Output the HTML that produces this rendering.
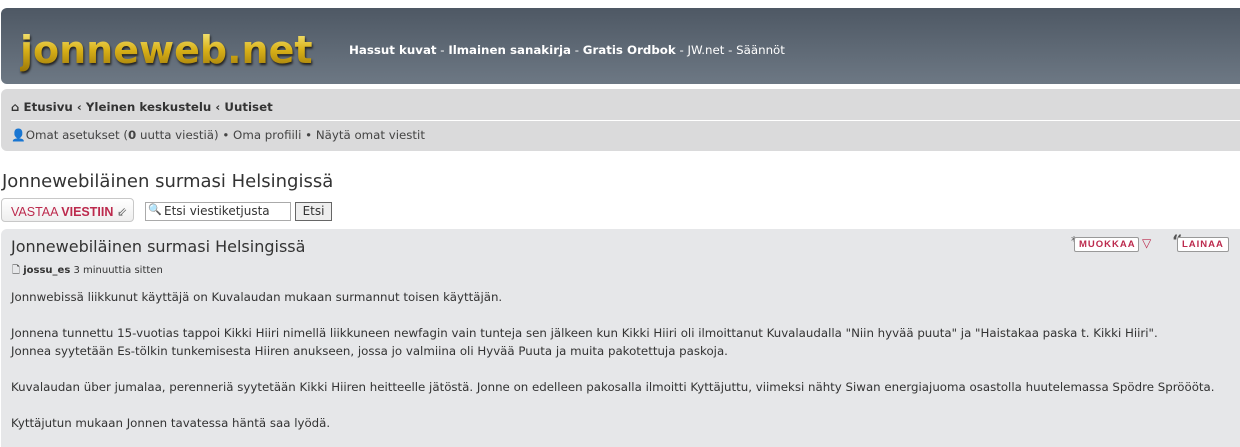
<!DOCTYPE html>
<html><head><meta charset="utf-8"><style>
*{margin:0;padding:0;box-sizing:border-box}
body{width:1240px;height:447px;overflow:hidden;background:#fff;font-family:"DejaVu Sans","Liberation Sans",sans-serif;font-size:11px;color:#333}
.hdr{position:absolute;left:1px;top:8px;width:1239px;height:76px;border-radius:6px 0 0 6px;background:linear-gradient(#4e5864,#6d7884)}
.logo{position:absolute;left:19px;top:20px;font-family:"DejaVu Sans",sans-serif;font-size:38px;letter-spacing:0px;font-weight:bold;color:#d9b820;background:linear-gradient(#fbf08a,#d8b018 50%,#9a7608);-webkit-background-clip:text;background-clip:text;-webkit-text-fill-color:transparent;filter:drop-shadow(1px 2px 1px #222)}
.links{position:absolute;left:348px;top:35px;color:#fff;font-size:11.8px}
.links b{font-weight:bold}
.nav{position:absolute;left:1px;top:89px;width:1239px;height:62px;background:#dadadb;border-radius:6px 0 0 6px}
.nav .l1{position:absolute;left:10px;top:11px;font-weight:bold;font-size:11.8px;color:#333}
.nav hr{position:absolute;left:10px;right:0;top:31px;border:0;border-top:1px solid #fff}
.nav .l2{position:absolute;left:10px;top:39px;font-size:11.8px;color:#444}
h1{position:absolute;left:2px;top:171px;font-size:18px;font-weight:normal;color:#333}
.btn{position:absolute;left:1px;top:198px;width:133px;height:24px;border:1px solid #c8c8c8;border-radius:4px;background:linear-gradient(#fff,#eee);color:#bc2a4d;font-family:"Liberation Sans",sans-serif;font-size:12.5px;padding:5px 0 0 9px}
.search{position:absolute;left:145px;top:202px;width:146px;height:19px;border:1px solid #aaa;background:#fff;font-size:12px;padding:1px 0 0 18px;color:#333}
.go{position:absolute;left:295px;top:202px;width:37px;height:19px;border:1px solid #666;background:#eee;font-size:12px;text-align:center;padding-top:1px}
.post{position:absolute;left:1px;top:229px;width:1239px;height:218px;background:#e6e7e9;border-radius:6px 0 0 0}
.post h2{position:absolute;left:10px;top:8px;font-size:16px;font-weight:normal;color:#333}
.meta{position:absolute;left:11px;top:34px;font-size:10px}
.txt{position:absolute;left:10px;top:59px;font-size:11.8px;line-height:18px;color:#333}
.pb{position:absolute;top:8px;height:15px;border:1px solid #999;border-radius:2px;background:#fff;color:#bc2a4d;font-family:"Liberation Sans",sans-serif;font-weight:bold;font-size:9.5px;letter-spacing:1px;padding:1px 4px 0}
</style></head><body>
<div class="hdr"><div class="logo">jonneweb.net</div>
<div class="links"><b>Hassut kuvat</b> - <b>Ilmainen sanakirja</b> - <b>Gratis Ordbok</b> - JW.net - Säännöt</div></div>
<div class="nav"><div class="l1">⌂ Etusivu ‹ Yleinen keskustelu ‹ Uutiset</div><hr>
<div class="l2">👤Omat asetukset (<b>0</b> uutta viestiä) • Oma profiili • Näytä omat viestit</div></div>
<h1>Jonnewebiläinen surmasi Helsingissä</h1>
<div class="btn">VASTAA <b>VIESTIIN</b> <span style="color:#666">⇙</span></div>
<div class="search"><span style="position:absolute;left:2px;top:0;font-size:11px">🔍</span>Etsi viestiketjusta</div>
<div class="go">Etsi</div>
<div class="post"><h2>Jonnewebiläinen surmasi Helsingissä</h2>
<div class="meta">🗋 <b>jossu_es</b> 3 minuuttia sitten</div>
<span style="position:absolute;left:1070px;top:5px;font-size:12px;color:#555">*</span>
<div class="pb" style="left:1073px;width:65px">MUOKKAA</div>
<span style="position:absolute;left:1141px;top:7px;font-size:12px;color:#bc2a4d;font-weight:bold">▽</span>
<span style="position:absolute;left:1171px;top:2px;font-size:16px;color:#555;font-weight:bold">“</span>
<div class="pb" style="left:1176px;width:52px">LAINAA</div>
<div class="txt">Jonnwebissä liikkunut käyttäjä on Kuvalaudan mukaan surmannut toisen käyttäjän.<br><br>
Jonnena tunnettu 15-vuotias tappoi Kikki Hiiri nimellä liikkuneen newfagin vain tunteja sen jälkeen kun Kikki Hiiri oli ilmoittanut Kuvalaudalla "Niin hyvää puuta" ja "Haistakaa paska t. Kikki Hiiri".<br>
Jonnea syytetään Es-tölkin tunkemisesta Hiiren anukseen, jossa jo valmiina oli Hyvää Puuta ja muita pakotettuja paskoja.<br><br>
Kuvalaudan über jumalaa, perenneriä syytetään Kikki Hiiren heitteelle jätöstä. Jonne on edelleen pakosalla ilmoitti Kyttäjuttu, viimeksi nähty Siwan energiajuoma osastolla huutelemassa Spödre Spröööta.<br><br>
Kyttäjutun mukaan Jonnen tavatessa häntä saa lyödä.</div>
</div>
</body></html>
